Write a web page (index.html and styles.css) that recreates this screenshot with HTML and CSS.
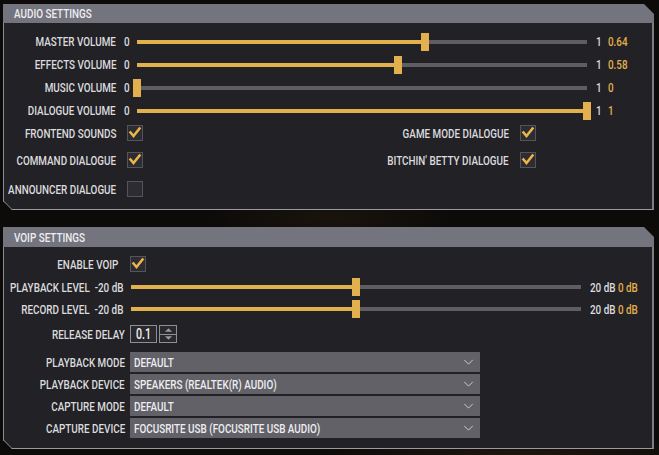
FILE: index.html
```html
<!DOCTYPE html>
<html>
<head>
<meta charset="utf-8">
<link rel="stylesheet" href="styles.css">
</head>
<body>
<div class="page">
  <section class="panel panel-audio">
    <div class="panel-head"><span class="t tl">AUDIO SETTINGS</span></div>
    <div class="panel-body audio-body">
      <div class="srow">
        <span class="label"><span class="t tr">MASTER VOLUME</span></span><span class="min"><span class="t tl">0</span></span>
        <div class="track"><div class="fill" style="width:64%"></div><div class="thumb" style="left:64%"></div></div>
        <span class="max"><span class="t tl">1</span></span><span class="val"><span class="t tl">0.64</span></span>
      </div>
      <div class="srow">
        <span class="label"><span class="t tr">EFFECTS VOLUME</span></span><span class="min"><span class="t tl">0</span></span>
        <div class="track"><div class="fill" style="width:58%"></div><div class="thumb" style="left:58%"></div></div>
        <span class="max"><span class="t tl">1</span></span><span class="val"><span class="t tl">0.58</span></span>
      </div>
      <div class="srow">
        <span class="label"><span class="t tr">MUSIC VOLUME</span></span><span class="min"><span class="t tl">0</span></span>
        <div class="track"><div class="fill" style="width:0%"></div><div class="thumb" style="left:0%"></div></div>
        <span class="max"><span class="t tl">1</span></span><span class="val"><span class="t tl">0</span></span>
      </div>
      <div class="srow">
        <span class="label"><span class="t tr">DIALOGUE VOLUME</span></span><span class="min"><span class="t tl">0</span></span>
        <div class="track"><div class="fill" style="width:100%"></div><div class="thumb" style="left:100%"></div></div>
        <span class="max"><span class="t tl">1</span></span><span class="val"><span class="t tl">1</span></span>
      </div>
      <div class="crow crow-1">
        <span class="label"><span class="t tr">FRONTEND SOUNDS</span></span>
        <span class="box checked"><svg viewBox="0 0 16 16"><polyline points="3.5,7.5 6.5,11 12.5,3.5"/></svg></span>
        <span class="label rlabel"><span class="t tr">GAME MODE DIALOGUE</span></span>
        <span class="box checked"><svg viewBox="0 0 16 16"><polyline points="3.5,7.5 6.5,11 12.5,3.5"/></svg></span>
      </div>
      <div class="crow crow-2">
        <span class="label"><span class="t tr">COMMAND DIALOGUE</span></span>
        <span class="box checked"><svg viewBox="0 0 16 16"><polyline points="3.5,7.5 6.5,11 12.5,3.5"/></svg></span>
        <span class="label rlabel"><span class="t tr">BITCHIN' BETTY DIALOGUE</span></span>
        <span class="box checked"><svg viewBox="0 0 16 16"><polyline points="3.5,7.5 6.5,11 12.5,3.5"/></svg></span>
      </div>
      <div class="crow crow-3">
        <span class="label"><span class="t tr">ANNOUNCER DIALOGUE</span></span>
        <span class="box"></span>
      </div>
    </div>
  </section>

  <section class="panel panel-voip">
    <div class="panel-head"><span class="t tl">VOIP SETTINGS</span></div>
    <div class="panel-body voip-body">
      <div class="vrow vrow-check">
        <span class="vlabel vlabel-check"><span class="t tr">ENABLE VOIP</span></span>
        <span class="box checked"><svg viewBox="0 0 16 16"><polyline points="3.5,7.5 6.5,11 12.5,3.5"/></svg></span>
      </div>
      <div class="vrow vrow-slider">
        <span class="vlabel"><span class="t tr">PLAYBACK LEVEL&nbsp; -20 dB</span></span>
        <div class="track vtrack"><div class="fill" style="width:50%"></div><div class="thumb" style="left:50%"></div></div>
        <span class="vmax"><span class="t tl">20 dB <span class="val">0 dB</span></span></span>
      </div>
      <div class="vrow vrow-slider">
        <span class="vlabel"><span class="t tr">RECORD LEVEL&nbsp; -20 dB</span></span>
        <div class="track vtrack"><div class="fill" style="width:50%"></div><div class="thumb" style="left:50%"></div></div>
        <span class="vmax"><span class="t tl">20 dB <span class="val">0 dB</span></span></span>
      </div>
      <div class="vrow vrow-delay">
        <span class="vlabel"><span class="t tr">RELEASE DELAY</span></span>
        <span class="numbox"><span class="t tl">0.1</span></span>
        <span class="spinner">
          <span class="spin-up"><svg viewBox="0 0 10 5"><polygon points="1,5 5,1 9,5"/></svg></span>
          <span class="spin-down"><svg viewBox="0 0 10 5"><polygon points="1,0 5,4 9,0"/></svg></span>
        </span>
      </div>
      <div class="vrow vrow-select">
        <span class="vlabel"><span class="t tr">PLAYBACK MODE</span></span>
        <div class="select"><span class="t tl">DEFAULT</span><svg class="chev" viewBox="0 0 12 7"><polyline points="1,1 6,6 11,1"/></svg></div>
      </div>
      <div class="vrow vrow-select">
        <span class="vlabel"><span class="t tr">PLAYBACK DEVICE</span></span>
        <div class="select"><span class="t tl">SPEAKERS (REALTEK(R) AUDIO)</span><svg class="chev" viewBox="0 0 12 7"><polyline points="1,1 6,6 11,1"/></svg></div>
      </div>
      <div class="vrow vrow-select">
        <span class="vlabel"><span class="t tr">CAPTURE MODE</span></span>
        <div class="select"><span class="t tl">DEFAULT</span><svg class="chev" viewBox="0 0 12 7"><polyline points="1,1 6,6 11,1"/></svg></div>
      </div>
      <div class="vrow vrow-select">
        <span class="vlabel"><span class="t tr">CAPTURE DEVICE</span></span>
        <div class="select"><span class="t tl">FOCUSRITE USB (FOCUSRITE USB AUDIO)</span><svg class="chev" viewBox="0 0 12 7"><polyline points="1,1 6,6 11,1"/></svg></div>
      </div>
    </div>
  </section>
</div>
</body>
</html>
```

FILE: styles.css
```css
html, body {
  margin: 0;
  padding: 0;
}
body {
  width: 659px;
  height: 455px;
  overflow: hidden;
  background:
    radial-gradient(ellipse 120px 30px at 330px 218px, rgba(70, 48, 20, 0.22), transparent),
    radial-gradient(ellipse 200px 20px at 520px 454px, rgba(70, 48, 18, 0.3), transparent),
    #0d0b0a;
  font-family: Roboto, "Liberation Sans", sans-serif;
  font-size: 13px;
  font-weight: 500;
  color: #dcdcde;
}
.t {
  display: inline-block;
  white-space: nowrap;
  transform: scaleX(0.76);
  flex: none;
}
.tl { transform-origin: left center; }
.tr { transform-origin: right center; }

.page {
  padding: 4px 0 0 3px;
  display: flex;
  flex-direction: column;
}
.panel {
  width: 651px;
}
.panel-voip {
  margin-top: 17px;
}
.panel-head {
  height: 19px;
  line-height: 20px;
  background: #73747e;
  color: #eeeef0;
  padding-left: 11px;
  white-space: nowrap;
  clip-path: polygon(0 0, calc(100% - 10px) 0, 100% 10px, 100% 100%, 0 100%);
}
.panel-voip .panel-head {
  height: 20px;
  line-height: 21px;
}
.panel-body {
  position: relative;
  background: #222126;
  border-left: 1px solid #8a8a90;
  border-right: 2px solid #7c7c82;
  border-bottom: 1px solid #9a9aa0;
  clip-path: polygon(0 0, 100% 0, 100% 100%, 9px 100%, 0 calc(100% - 9px));
}
.panel-body::after {
  content: "";
  position: absolute;
  left: -1px;
  bottom: -1px;
  width: 13px;
  height: 1px;
  background: #9a9aa0;
  transform-origin: 0 0;
  transform: translate(0, -9px) rotate(45deg);
}
.audio-body {
  height: 187px;
  box-sizing: border-box;
  padding-top: 7px;
}
.voip-body {
  height: 202px;
  box-sizing: border-box;
  padding-top: 5px;
}

/* slider rows */
.srow {
  display: flex;
  align-items: center;
  height: 23px;
}
.label, .vlabel {
  display: flex;
  justify-content: flex-end;
  white-space: nowrap;
  flex: none;
}
.srow .label {
  width: 112px;
}
.min {
  width: 13px;
  margin-left: 8px;
  flex: none;
}
.track {
  position: relative;
  width: 450px;
  height: 4px;
  background: #5e5e62;
  flex: none;
}
.fill {
  position: absolute;
  left: 0;
  top: 0;
  bottom: 0;
  background: #e2b04d;
}
.thumb {
  position: absolute;
  top: -7px;
  width: 8px;
  height: 18px;
  margin-left: -4px;
  background: #e2b04d;
}
.max {
  margin-left: 9px;
  width: 12px;
  flex: none;
}
.val {
  color: #e2b04d;
}

/* checkbox rows */
.crow {
  display: flex;
  align-items: center;
  height: 22px;
}
.crow-2 { margin-top: 5px; }
.crow-3 { margin-top: 7px; }
.crow .label {
  width: 112px;
  margin-right: 11px;
}
.crow .rlabel {
  width: 366px;
}
.box {
  width: 16px;
  height: 16px;
  box-sizing: border-box;
  border: 1px solid #55545b;
  background: #2d2c32;
  flex: none;
  display: flex;
}
.box svg {
  width: 16px;
  height: 16px;
  margin: -1px;
}
.box polyline {
  fill: none;
  stroke: #eab647;
  stroke-width: 2.6;
  stroke-linecap: square;
  stroke-linejoin: miter;
}

/* voip rows */
.vrow {
  display: flex;
  align-items: center;
}
.vlabel {
  width: 121px;
  margin-right: 5px;
}
.vrow-check {
  height: 24px;
}
.vrow .vlabel-check {
  width: 114px;
  margin-right: 12px;
}
.vrow-slider {
  height: 22px;
}
.vrow-slider .vlabel {
  width: 119px;
  margin-right: 8px;
}
.vmax {
  margin-left: 9px;
  white-space: nowrap;
}
.vrow-delay {
  height: 26px;
  margin-top: 1px;
}
.numbox {
  width: 27px;
  height: 18px;
  box-sizing: border-box;
  border: 1px solid #8e8e94;
  background: #2a292e;
  color: #f2f2f2;
  font-size: 14px;
  line-height: 17px;
  padding-left: 5px;
  margin-right: 2px;
}
.spinner {
  width: 18px;
  height: 18px;
  box-sizing: border-box;
  border: 1px solid #8e8e94;
  background: #2a292e;
  display: flex;
  flex-direction: column;
}
.spin-up, .spin-down {
  flex: 1;
  display: flex;
  align-items: center;
  justify-content: center;
}
.spin-up {
  border-bottom: 1px solid #8e8e94;
}
.spinner svg {
  width: 9px;
  height: 5px;
}
.spinner polygon {
  fill: #9a9aa0;
}
.vrow-select {
  height: 20px;
  margin-bottom: 2px;
}
.vrow-delay + .vrow-select {
  margin-top: 5px;
}
.select {
  width: 350px;
  height: 20px;
  background: #626168;
  display: flex;
  align-items: center;
  justify-content: space-between;
  padding: 0 6px 0 4px;
  box-sizing: border-box;
  color: #eeeef0;
  line-height: 22px;
  overflow: hidden;
}
.select .t {
  padding-top: 2px;
}
.chev {
  width: 11px;
  height: 6px;
  flex: none;
}
.chev polyline {
  fill: none;
  stroke: #dcdcde;
  stroke-width: 1;
}
```
